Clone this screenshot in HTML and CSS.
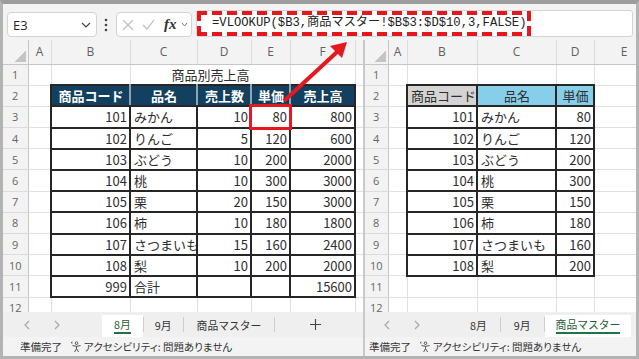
FILE: index.html
```html
<!DOCTYPE html>
<html lang="ja">

<head>
    <meta charset="UTF-8">
    <meta name="viewport" content="width=device-width, initial-scale=1.0">
    <title>VLOOKUP 商品マスター</title>
    <link rel="stylesheet" href="styles.css">
</head>

<body>
    <div class="screen">
        <div class="fbar">
            <div class="namebox">
                <span>E3</span>
                <svg width="10" height="6" viewBox="0 0 10 6"><polyline points="1,1 5,5 9,1" fill="none" stroke="#444" stroke-width="1.2"/></svg>
            </div>
            <svg class="dots" width="4" height="14" viewBox="0 0 4 14"><circle cx="2" cy="2" r="1.3" fill="#444"/><circle cx="2" cy="7" r="1.3" fill="#444"/><circle cx="2" cy="12" r="1.3" fill="#444"/></svg>
            <div class="fxbox">
                <svg width="12" height="12" viewBox="0 0 12 12"><path d="M1 1 L11 11 M11 1 L1 11" stroke="#bdbdbd" stroke-width="1.2"/></svg>
                <svg class="ok" width="13" height="12" viewBox="0 0 13 12"><polyline points="1,6 5,10 12,1" fill="none" stroke="#bdbdbd" stroke-width="1.2"/></svg>
                <span class="fx">fx</span>
                <svg class="small" width="7" height="5" viewBox="0 0 7 5"><polyline points="1,1 3.5,4 6,1" fill="none" stroke="#777" stroke-width="1"/></svg>
            </div>
            <div class="formula">
                <span class="hl">=VLOOKUP($B3,商品マスター!$B$3:$D$10,3,FALSE)</span>
            </div>
        </div>

        <div class="panes">
            <!-- 8月 sheet -->
            <div class="pane left">
                <div class="sheet">
                    <table class="grid">
                        <colgroup>
                            <col style="width:25px"><col style="width:23px"><col style="width:79px"><col style="width:67px">
                            <col style="width:54px"><col style="width:39px"><col style="width:65px"><col style="width:8px">
                        </colgroup>
                        <tr class="colhdr"><th class="corner"></th><th>A</th><th>B</th><th>C</th><th>D</th><th>E</th><th>F</th><th></th></tr>
                        <tr><th>1</th><td></td><td></td><td colspan="3" class="title">商品別売上高</td><td></td><td></td></tr>
                        <tr><th>2</th><td></td><td class="t h">商品コード</td><td class="t h">品名</td><td class="t h">売上数</td><td class="t h">単価</td><td class="t h end">売上高</td><td></td></tr>
                        <tr><th>3</th><td></td><td class="t n">101</td><td class="t">みかん</td><td class="t n">10</td><td class="t n sel">80</td><td class="t n">800</td><td></td></tr>
                        <tr><th>4</th><td></td><td class="t n">102</td><td class="t">りんご</td><td class="t n">5</td><td class="t n">120</td><td class="t n">600</td><td></td></tr>
                        <tr><th>5</th><td></td><td class="t n">103</td><td class="t">ぶどう</td><td class="t n">10</td><td class="t n">200</td><td class="t n">2000</td><td></td></tr>
                        <tr><th>6</th><td></td><td class="t n">104</td><td class="t">桃</td><td class="t n">10</td><td class="t n">300</td><td class="t n">3000</td><td></td></tr>
                        <tr><th>7</th><td></td><td class="t n">105</td><td class="t">栗</td><td class="t n">20</td><td class="t n">150</td><td class="t n">3000</td><td></td></tr>
                        <tr><th>8</th><td></td><td class="t n">106</td><td class="t">柿</td><td class="t n">10</td><td class="t n">180</td><td class="t n">1800</td><td></td></tr>
                        <tr><th>9</th><td></td><td class="t n">107</td><td class="t">さつまいも</td><td class="t n">15</td><td class="t n">160</td><td class="t n">2400</td><td></td></tr>
                        <tr><th>10</th><td></td><td class="t n">108</td><td class="t">梨</td><td class="t n">10</td><td class="t n">200</td><td class="t n">2000</td><td></td></tr>
                        <tr><th>11</th><td></td><td class="t n">999</td><td class="t">合計</td><td class="t"></td><td class="t"></td><td class="t n">15600</td><td></td></tr>
                        <tr><th>12</th><td></td><td></td><td></td><td></td><td></td><td></td><td></td></tr>
                    </table>
                </div>
                <div class="tabs">
                    <div class="nav">
                        <span><svg width="6" height="10" viewBox="0 0 6 10"><polyline points="5,1 1,5 5,9" fill="none" stroke="#a8a8a8" stroke-width="1.2"/></svg></span>
                        <span><svg width="6" height="10" viewBox="0 0 6 10"><polyline points="1,1 5,5 1,9" fill="none" stroke="#a8a8a8" stroke-width="1.2"/></svg></span>
                    </div>
                    <div class="sheets">
                        <div class="tab on l8"><span>8月</span></div>
                        <div class="sep"></div>
                        <div class="tab l9">9月</div>
                        <div class="sep"></div>
                        <div class="tab lm">商品マスター</div>
                        <div class="sep"></div>
                        <svg class="plus" width="11" height="11" viewBox="0 0 11 11"><path d="M5.5 0 V11 M0 5.5 H11" stroke="#444" stroke-width="1.1"/></svg>
                    </div>
                </div>
                <div class="status">
                    <span>準備完了</span>
                    <span class="acc">
                        <svg width="12" height="12" viewBox="0 0 12 12"><circle cx="6.5" cy="2.2" r="1.3" fill="none" stroke="#444" stroke-width="0.9"/><path d="M2.5 4.6 Q6.5 6 10.5 4.6 M6.5 5.4 V7.6 L4.6 11 M6.5 7.6 L8.6 11 M1.2 1 L2.4 2.2 M2.4 1 L1.2 2.2" fill="none" stroke="#444" stroke-width="0.9"/></svg>
                        アクセシビリティ: 問題ありません
                    </span>
                </div>
            </div>

            <!-- 商品マスター sheet -->
            <div class="pane right">
                <div class="sheet">
                    <table class="grid">
                        <colgroup>
                            <col style="width:23px"><col style="width:19px"><col style="width:70px">
                            <col style="width:79px"><col style="width:38px"><col style="width:60px">
                        </colgroup>
                        <tr class="colhdr"><th class="corner"></th><th>A</th><th>B</th><th>C</th><th>D</th><th>E</th></tr>
                        <tr><th>1</th><td></td><td></td><td></td><td></td><td></td></tr>
                        <tr><th>2</th><td></td><td class="t g">商品コード</td><td class="t b">品名</td><td class="t b">単価</td><td></td></tr>
                        <tr><th>3</th><td></td><td class="t n">101</td><td class="t">みかん</td><td class="t n">80</td><td></td></tr>
                        <tr><th>4</th><td></td><td class="t n">102</td><td class="t">りんご</td><td class="t n">120</td><td></td></tr>
                        <tr><th>5</th><td></td><td class="t n">103</td><td class="t">ぶどう</td><td class="t n">200</td><td></td></tr>
                        <tr><th>6</th><td></td><td class="t n">104</td><td class="t">桃</td><td class="t n">300</td><td></td></tr>
                        <tr><th>7</th><td></td><td class="t n">105</td><td class="t">栗</td><td class="t n">150</td><td></td></tr>
                        <tr><th>8</th><td></td><td class="t n">106</td><td class="t">柿</td><td class="t n">180</td><td></td></tr>
                        <tr><th>9</th><td></td><td class="t n">107</td><td class="t">さつまいも</td><td class="t n">160</td><td></td></tr>
                        <tr><th>10</th><td></td><td class="t n">108</td><td class="t">梨</td><td class="t n">200</td><td></td></tr>
                        <tr><th>11</th><td></td><td></td><td></td><td></td><td></td></tr>
                        <tr><th>12</th><td></td><td></td><td></td><td></td><td></td></tr>
                    </table>
                </div>
                <div class="tabs">
                    <div class="nav">
                        <span><svg width="6" height="10" viewBox="0 0 6 10"><polyline points="5,1 1,5 5,9" fill="none" stroke="#a8a8a8" stroke-width="1.2"/></svg></span>
                        <span><svg width="6" height="10" viewBox="0 0 6 10"><polyline points="1,1 5,5 1,9" fill="none" stroke="#a8a8a8" stroke-width="1.2"/></svg></span>
                    </div>
                    <div class="sheets">
                        <div class="tab r8">8月</div>
                        <div class="sep"></div>
                        <div class="tab r9">9月</div>
                        <div class="sep"></div>
                        <div class="tab on rm"><span>商品マスター</span></div>
                    </div>
                </div>
                <div class="status">
                    <span>準備完了</span>
                    <span class="acc">
                        <svg width="12" height="12" viewBox="0 0 12 12"><circle cx="6.5" cy="2.2" r="1.3" fill="none" stroke="#444" stroke-width="0.9"/><path d="M2.5 4.6 Q6.5 6 10.5 4.6 M6.5 5.4 V7.6 L4.6 11 M6.5 7.6 L8.6 11 M1.2 1 L2.4 2.2 M2.4 1 L1.2 2.2" fill="none" stroke="#444" stroke-width="0.9"/></svg>
                        アクセシビリティ: 問題ありません
                    </span>
                </div>
            </div>
        </div>

        <!-- arrow from E3 to the formula -->
        <svg class="arrow" width="639" height="359" viewBox="0 0 639 359">
            <line x1="284" y1="101" x2="337" y2="52" stroke="#e3191f" stroke-width="4"/>
            <polygon points="347,42 342,58 330,46" fill="#e3191f"/>
        </svg>
    </div>
</body>

</html>
```

FILE: styles.css
```css
* {
    margin: 0;
    padding: 0;
    box-sizing: border-box;
}

body {
    background: #fff;
    font-family: "Noto Sans CJK JP", sans-serif;
}

.screen {
    position: relative;
    width: 639px;
    height: 359px;
    border: 3px solid #b3b3b3;
    border-top: 4px solid #9d9d9d;
    background: #f3f3f3;
    display: flex;
    flex-direction: column;
    overflow: hidden;
}

/* formula bar */
.fbar {
    height: 36px;
    display: flex;
    align-items: flex-start;
    padding: 8px 0 0 4px;
}

.namebox {
    width: 90px;
    height: 25px;
    background: #fff;
    border: 1px solid #d4d4d4;
    border-radius: 4px;
    display: flex;
    align-items: center;
    justify-content: space-between;
    padding: 0 5px;
    font: 13px "Open Sans", sans-serif;
    color: #262626;
}

.dots {
    margin: 6px 8px 0 7px;
}

.fxbox {
    width: 76px;
    height: 25px;
    background: #fff;
    border: 1px solid #d4d4d4;
    border-radius: 4px;
    display: flex;
    align-items: center;
    padding-left: 5px;
}

.fxbox .ok { margin-left: 8px; }

.fx {
    margin-left: 9px;
    font: italic bold 15px "Liberation Serif", serif;
    color: #333;
}

.fxbox .small { margin-left: 4px; }

.formula {
    flex: 1;
    height: 27px;
    margin: -2px 3px 0 4px;
    background: #fff;
    border: 1px solid #d4d4d4;
    border-radius: 3px;
}

.hl {
    display: block;
    width: 334px;
    height: 25px;
    padding-left: 15px;
    font: 12.2px "Liberation Mono", "Noto Sans CJK JP", monospace;
    line-height: 25px;
    color: #222;
    white-space: nowrap;
    background:
        repeating-linear-gradient(90deg, #e5161d 0 10px, transparent 10px 15px) left top / 100% 4px no-repeat,
        repeating-linear-gradient(90deg, #e5161d 0 10px, transparent 10px 15px) left bottom / 100% 4px no-repeat,
        repeating-linear-gradient(180deg, #e5161d 0 10px, transparent 10px 15px) left top / 4px 100% no-repeat,
        repeating-linear-gradient(180deg, #e5161d 0 10px, transparent 10px 15px) right top / 4px 100% no-repeat;
}

/* windows */
.panes {
    flex: 1;
    display: flex;
}

.pane {
    display: flex;
    flex-direction: column;
}

.pane.left { width: 360px; }

.pane.right {
    width: 273px;
    border-left: 2px solid #c9c9c9;
}

.sheet {
    height: 272px;
    overflow: hidden;
    background: #fff;
}

.grid {
    border-collapse: collapse;
    table-layout: fixed;
    font-size: 13px;
    color: #2e2e2e;
}

.left .grid { width: 360px; }
.right .grid { width: 289px; }

.grid tr { height: 21.2px; }
.grid tr.colhdr { height: 24px; }

.grid td, .grid th {
    border: 1px solid #e0e0e0;
    padding: 0 2px 0 3px;
    line-height: 15px;
    white-space: nowrap;
    overflow: hidden;
    font-weight: normal;
}

.grid th {
    background: #f3f3f3;
    color: #666;
    font: 11px "Open Sans", sans-serif;
    line-height: 15px;
    text-align: center;
    border-color: #dcdcdc;
    padding: 0;
}

.grid tr > th:first-child {
    border-left: 0;
    border-right-color: #c6c6c6;
}

.grid .colhdr th {
    border-top: 0;
    border-bottom-color: #c6c6c6;
    color: #5f5f5f;
    font-size: 12px;
}

.grid .corner {
    background: #f3f3f3 linear-gradient(135deg, transparent 50%, #c4c4c4 50%) no-repeat right 2px bottom 2px / 11px 11px;
}

.title { text-align: center; }

.t { border: 2px solid #262626 !important; }

.n {
    text-align: right;
    padding-right: 2px !important;
}

.h {
    background: #12405e;
    color: #fff;
    font-weight: bold !important;
    text-align: center;
    border-right-color: #8fa4b3 !important;
}

.h.end { border-right-color: #262626 !important; }

.g {
    background: #d4d4d4;
    text-align: center;
}

.b {
    background: #87ceeb;
    text-align: center;
}

.sel {
    outline: 3px solid #e3191f;
    outline-offset: -1px;
}

/* sheet tabs */
.tabs {
    height: 25px;
    display: flex;
    align-items: center;
    background: #efefef;
    font-size: 10.8px;
    color: #333;
}

.nav {
    display: flex;
    height: 100%;
}

.nav span {
    width: 30px;
    display: flex;
    align-items: center;
    justify-content: center;
}

.left .nav { padding-left: 9px; }
.right .nav { padding-left: 7px; }

.sheets {
    display: flex;
    align-items: center;
    height: 100%;
}

.left .sheets { margin-left: 30px; }
.right .sheets { margin-left: 25px; }

.tab {
    height: 100%;
    display: flex;
    align-items: center;
    padding: 0 13px;
}

.tab.on {
    height: 22px;
    align-self: flex-end;
    background: #fff;
    color: #1d5e38;
}

.tab.on span {
    border-bottom: 2px solid #217346;
    line-height: 15px;
    margin-bottom: 2px;
}

.l8 { padding: 0 12px; }
.l9 { padding: 0 11px; }
.rm { padding: 0 11px; }

.sep {
    width: 1px;
    height: 15px;
    background: #cdcdcd;
}

.plus { margin-left: 35px; }

/* status bar */
.status {
    height: 19px;
    display: flex;
    align-items: center;
    font-size: 10.5px;
    color: #333;
    background: #f3f3f3;
    white-space: nowrap;
}

.left .status { padding-left: 17px; }
.right .status { padding-left: 4px; }

.acc {
    display: flex;
    align-items: center;
    margin-left: 8px;
    font-feature-settings: "palt";
}

.acc svg { margin-right: 2px; }

.arrow {
    position: absolute;
    left: -3px;
    top: -4px;
    pointer-events: none;
}
```
